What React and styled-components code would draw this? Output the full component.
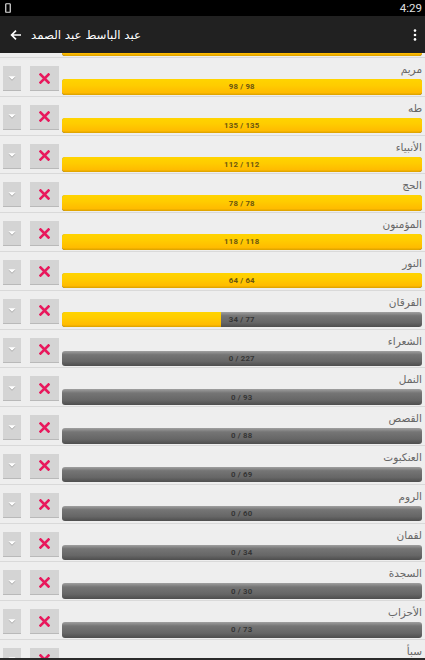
import React from 'react';
import styled, { createGlobalStyle } from 'styled-components';

const GlobalStyle = createGlobalStyle`
    html, body {
        margin: 0;
        padding: 0;
        background: #eeeeee;
    }
    body {
        font-family: "DejaVu Sans", Roboto, sans-serif;
    }
`

const surahs = [
    { name: 'الكهف', done: 110, total: 110 },
    { name: 'مريم', done: 98, total: 98 },
    { name: 'طه', done: 135, total: 135 },
    { name: 'الأنبياء', done: 112, total: 112 },
    { name: 'الحج', done: 78, total: 78 },
    { name: 'المؤمنون', done: 118, total: 118 },
    { name: 'النور', done: 64, total: 64 },
    { name: 'الفرقان', done: 34, total: 77 },
    { name: 'الشعراء', done: 0, total: 227 },
    { name: 'النمل', done: 0, total: 93 },
    { name: 'القصص', done: 0, total: 88 },
    { name: 'العنكبوت', done: 0, total: 69 },
    { name: 'الروم', done: 0, total: 60 },
    { name: 'لقمان', done: 0, total: 34 },
    { name: 'السجدة', done: 0, total: 30 },
    { name: 'الأحزاب', done: 0, total: 73 },
    { name: 'سبأ', done: 0, total: 54 },
];

const Screen = styled.div`
    width: 425px;
    height: 660px;
    display: flex;
    flex-direction: column;
    overflow: hidden;
    background: #eeeeee;
`

const StatusBar = styled.div`
    height: 16px;
    flex: none;
    background: #000;
    display: flex;
    align-items: center;
    justify-content: space-between;
    padding: 0 3px 0 5px;
    color: #e0e0e0;
    font-family: Roboto, sans-serif;
    font-size: 11.5px;
`

const Toolbar = styled.div`
    height: 37px;
    flex: none;
    background: #212121;
    display: flex;
    align-items: center;
    padding: 0 8px 0 10px;
    position: relative;
    z-index: 2;
`

const Title = styled.div`
    flex: 1;
    color: #ffffff;
    font-size: 11.8px;
    margin-left: 9px;
    direction: rtl;
    text-align: left;
`

const List = styled.div`
    flex: 1;
    overflow: hidden;
`

const Scroller = styled.div`
    margin-top: -33.8px;
`

const BottomEdge = styled.div`
    height: 2px;
    flex: none;
    background: #2a2a2a;
`

const Row = styled.div`
    height: 38.8px;
    box-sizing: border-box;
    border-bottom: 1px solid #d9d9d9;
    display: flex;
    padding: 0 3px 0 3px;
`

const Controls = styled.div`
    display: flex;
    gap: 9px;
    padding-top: 8px;
    flex: none;
`

const ActionButton = styled.div`
    width: ${p => p.$wide ? '28.5px' : '18px'};
    height: 24px;
    background: #d4d4d4;
    border-bottom: 1.5px solid #b9b9b9;
    display: flex;
    align-items: center;
    justify-content: center;
`

const Body = styled.div`
    flex: 1;
    margin-left: 3px;
    display: flex;
    flex-direction: column;
`

const Name = styled.div`
    height: 21px;
    box-sizing: border-box;
    padding-top: 5px;
    direction: rtl;
    text-align: right;
    font-size: 10.5px;
    color: #666666;
    line-height: 12px;
`

const Bar = styled.div`
    position: relative;
    height: 15.5px;
    border-radius: 3px;
    overflow: hidden;
    background: linear-gradient(#a0a0a0 0%, #757575 25%, #666666 70%, #4e4e4e 100%);
`

const Fill = styled.div`
    position: absolute;
    left: 0;
    top: 0;
    bottom: 0;
    background: linear-gradient(#ffd400 0%, #ffcc00 40%, #ffbb00 85%, #d9a000 100%);
`

const BarLabel = styled.div`
    position: relative;
    height: 100%;
    display: flex;
    align-items: center;
    justify-content: center;
    font-family: Roboto, sans-serif;
    font-weight: 700;
    font-size: 7.8px;
    color: ${p => p.$full ? '#6b5510' : '#353535'};
    letter-spacing: 0.2px;
`

function PhoneIcon() {
    return (
        <svg width="6" height="10" viewBox="0 0 6 10">
            <rect x="0.75" y="0.75" width="4.5" height="8.5" rx="0.6" fill="none" stroke="#e0e0e0" strokeWidth="1.2" />
        </svg>
    )
}

function BackIcon() {
    return (
        <svg width="12" height="12" viewBox="0 0 12 12">
            <path d="M11 6H1.8M6 1.6L1.6 6L6 10.4" fill="none" stroke="#ffffff" strokeWidth="1.7" />
        </svg>
    )
}

function MenuIcon() {
    return (
        <svg width="4" height="12" viewBox="0 0 4 12">
            <circle cx="2" cy="1.6" r="1.3" fill="#fff" />
            <circle cx="2" cy="6" r="1.3" fill="#fff" />
            <circle cx="2" cy="10.4" r="1.3" fill="#fff" />
        </svg>
    )
}

function Caret() {
    return (
        <svg width="10" height="7" viewBox="0 0 10 7" style={{ flex: 'none' }}>
            <path d="M1.5 2.2H8.5L5 5.8Z" fill="#a9a9a9" />
            <path d="M1.5 1.2H8.5L5 4.8Z" fill="#ffffff" />
        </svg>
    )
}

function Cross() {
    return (
        <svg width="11" height="11" viewBox="0 0 11 11" style={{ flex: 'none' }}>
            <path d="M1.5 1.5L9.5 9.5M9.5 1.5L1.5 9.5" stroke="#e8185c" strokeWidth="2.6" strokeLinecap="square" />
        </svg>
    )
}

function SurahRow({ name, done, total }) {
    const pct = (done / total) * 100;
    return (
        <Row>
            <Controls>
                <ActionButton><Caret /></ActionButton>
                <ActionButton $wide><Cross /></ActionButton>
            </Controls>
            <Body>
                <Name>{name}</Name>
                <Bar>
                    <Fill style={{ width: pct + '%' }} />
                    <BarLabel $full={done === total}>{done} / {total}</BarLabel>
                </Bar>
            </Body>
        </Row>
    )
}

export default function App() {
    return (
        <>
            <GlobalStyle />
            <Screen>
                <StatusBar>
                    <PhoneIcon />
                    <span>4:29</span>
                </StatusBar>
                <Toolbar>
                    <BackIcon />
                    <Title>عبد الباسط عبد الصمد</Title>
                    <MenuIcon />
                </Toolbar>
                <List>
                    <Scroller>
                        {surahs.map(s => <SurahRow key={s.name} {...s} />)}
                    </Scroller>
                </List>
                <BottomEdge />
            </Screen>
        </>
    )
}
